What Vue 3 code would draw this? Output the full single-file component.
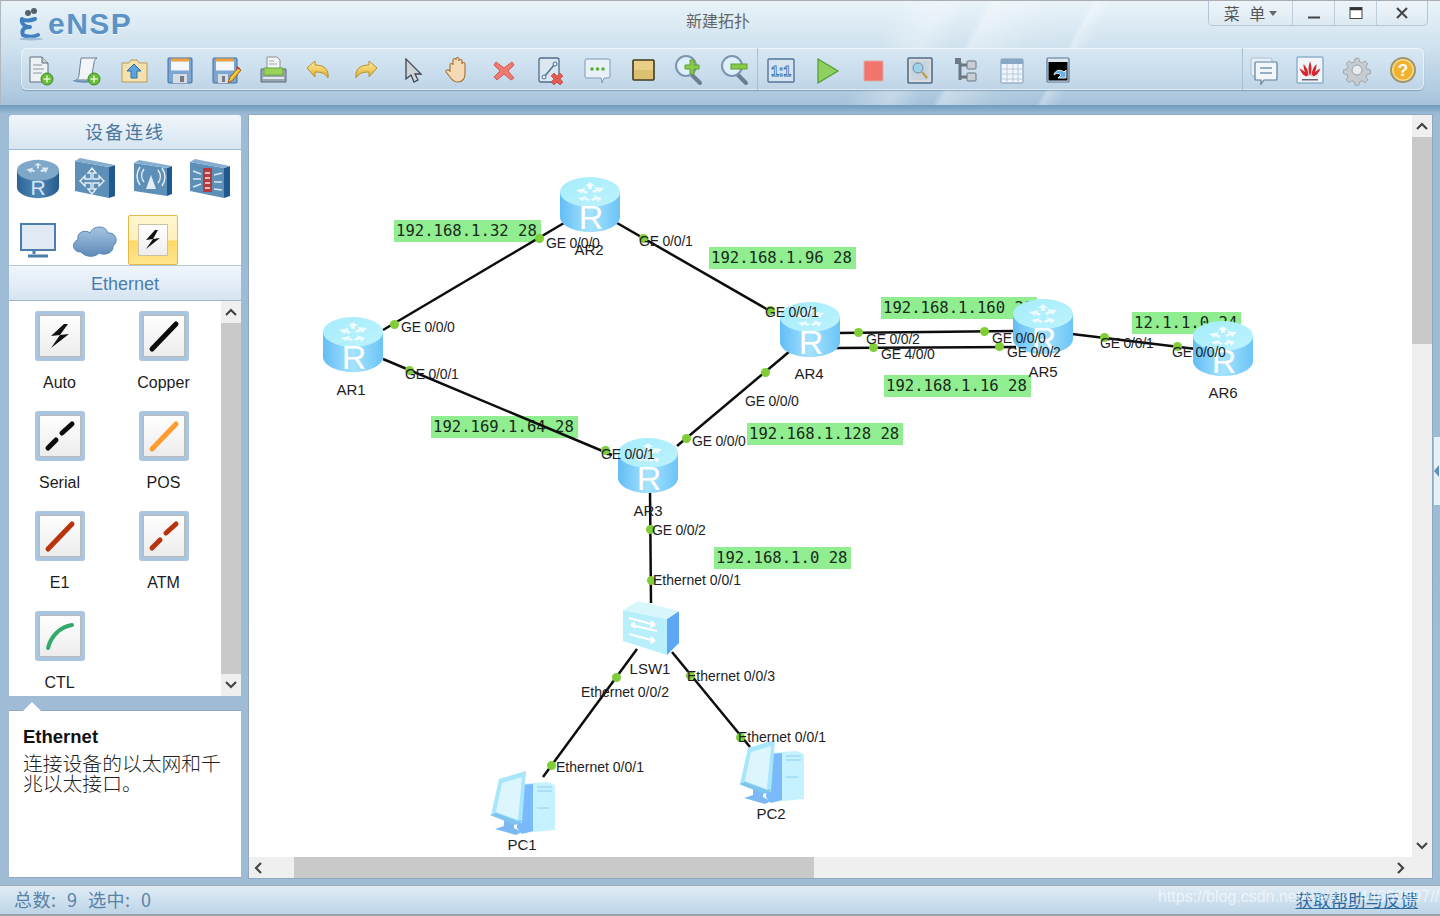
<script setup>
const OX = 249
const OY = 115

const links = [
  [383, 330, 564, 223], [617, 223, 770, 311], [383, 359, 612, 455], [677, 446, 790, 351],
  [838, 333, 1015, 331], [834, 348, 1016, 347], [1072, 334, 1196, 349],
  [650, 490, 651, 603], [637, 649, 543, 777], [672, 652, 750, 747]
]
const dots = [
  [394, 324], [539, 238], [643, 238], [770, 310], [409, 370], [605, 450], [686, 438], [765, 372],
  [858, 332], [984, 331], [873, 347], [999, 346], [1104, 337], [1177, 346], [650, 529], [651, 580],
  [616, 677], [551, 765], [690, 675], [740, 737]
]
const subnets = [
  { t: '192.168.1.32 28', x: 394, y: 220 }, { t: '192.168.1.96 28', x: 709, y: 247 },
  { t: '192.168.1.160 28', x: 881, y: 297 }, { t: '12.1.1.0 24', x: 1132, y: 312 },
  { t: '192.168.1.16 28', x: 884, y: 375 }, { t: '192.168.1.128 28', x: 747, y: 423 },
  { t: '192.168.1.0 28', x: 714, y: 547 }, { t: '192.169.1.64 28', x: 431, y: 416 }
]
const ports = [
  ['GE 0/0/0', 401, 327], ['GE 0/0/1', 405, 374], ['GE 0/0/0', 546, 243], ['GE 0/0/1', 639, 241],
  ['GE 0/0/1', 765, 312], ['GE 0/0/2', 866, 339], ['GE 4/0/0', 881, 354], ['GE 0/0/0', 745, 401],
  ['GE 0/0/0', 992, 338], ['GE 0/0/2', 1007, 352], ['GE 0/0/1', 1100, 343], ['GE 0/0/0', 1172, 352],
  ['GE 0/0/1', 601, 454], ['GE 0/0/0', 692, 441], ['GE 0/0/2', 652, 530],
  ['Ethernet 0/0/1', 653, 580], ['Ethernet 0/0/2', 581, 692], ['Ethernet 0/0/3', 687, 676],
  ['Ethernet 0/0/1', 556, 767], ['Ethernet 0/0/1', 738, 737]
]
const names = [
  ['AR1', 351, 389], ['AR2', 589, 249], ['AR3', 648, 510], ['AR4', 809, 373], ['AR5', 1043, 371],
  ['AR6', 1223, 392], ['LSW1', 650, 668], ['PC1', 522, 844], ['PC2', 771, 813]
]
const routers = [[323, 317], [560, 177], [618, 438], [780, 302], [1013, 299], [1193, 321]]
const pcs = [[489, 770], [738, 739]]

const cables = [
  { n: 'Auto', k: 'auto' }, { n: 'Copper', k: 'line', c: '#0c0c0c' },
  { n: 'Serial', k: 'dash', c: '#0c0c0c' }, { n: 'POS', k: 'line', c: '#ff9c2e' },
  { n: 'E1', k: 'line', c: '#b8330e' }, { n: 'ATM', k: 'dash', c: '#b8330e' },
  { n: 'CTL', k: 'curve', c: '#33aa6c' }
]
const pos = (x, y) => ({ left: x - OX + 'px', top: y - OY + 'px' })
</script>

<template>
  <div class="win">
    <svg class="defs" width="0" height="0" aria-hidden="true">
      <defs>
        <linearGradient id="rb" x1="0" x2="1" y1="0" y2="0">
          <stop offset="0" stop-color="#63bdf5" /><stop offset=".5" stop-color="#a5e3ff" /><stop offset="1" stop-color="#6cc4f6" />
        </linearGradient>
        <linearGradient id="rt" x1="0" x2="1" y1="0" y2="1">
          <stop offset="0" stop-color="#a5ecfb" /><stop offset="1" stop-color="#bdf3fd" />
        </linearGradient>
        <linearGradient id="dr" x1="0" x2="1" y1="0" y2="0">
          <stop offset="0" stop-color="#2c6496" /><stop offset=".5" stop-color="#4f88b6" /><stop offset="1" stop-color="#255b8c" />
        </linearGradient>
        <linearGradient id="yl" x1="0" x2="0" y1="0" y2="1">
          <stop offset="0" stop-color="#fbeea0" /><stop offset="1" stop-color="#e0ad2c" />
        </linearGradient>
        <linearGradient id="cl" x1="0" x2="0" y1="0" y2="1">
          <stop offset="0" stop-color="#a6c4e4" /><stop offset="1" stop-color="#5d8ab8" />
        </linearGradient>
        <symbol id="router" viewBox="0 0 60 56">
          <path d="M0 15v25c0 8 13 15 30 15s30-7 30-15V15z" fill="url(#rb)" />
          <ellipse cx="30" cy="15" rx="30" ry="15" fill="url(#rt)" />
          <path d="M16 13l10-2-2 2 4 2-2 2-4-2v2zM44 11l-10-1 2 2-4 2 2 2 4-2 1 2zM18 21l9-2-1 2 4 1-2 2-4-2-1 2zM42 21l-9-3 2 2-4 2 2 2 4-2 1 3zM30 5l5 4h-3v3h-4V9h-3z" fill="#fff" opacity=".8" />
          <text x="31" y="52" text-anchor="middle" font-family="Liberation Sans" font-size="34" fill="#fff">R</text>
        </symbol>
        <symbol id="pc" viewBox="0 0 66 66">
          <path d="M33 14l25-2 8 3v45l-32 3z" fill="#c6f1ff" />
          <path d="M30 15l14-1v47l-11 3-5-6z" fill="#7ab9fb" />
          <path d="M48 17h15M48 21h15M48 38h12" stroke="#8ed0ef" fill="none" />
          <path d="M2 45L10 9l27-8-4 52z" fill="#a8e6fb" />
          <path d="M7 42l6-29 20-6-4 43z" fill="#ddf6fe" />
          <path d="M1 45l6-2 22 8 3-1v2l-6 3z" fill="#7ec5ee" />
          <path d="M17 51l8 3v4l8 4-6 3-21-6 9-3v-6z" fill="#7cb9f2" />
        </symbol>
      </defs>
    </svg>

    <header class="head">
      <div class="titlerow">
        <div class="brand">
          <svg width="26" height="34" viewBox="0 0 26 34">
            <circle cx="10" cy="6" r="3" fill="#55606c" /><circle cx="16" cy="4" r="3" fill="#55606c" />
            <path d="M4 12c4 3 10 1 13 0M4 12c-1 5 3 8 8 8M12 20c-6 0-9 3-7 8 4 2 10 2 15 0" fill="none" stroke="#3f7fc0" stroke-width="4" stroke-linecap="round" />
            <ellipse cx="13" cy="32" rx="12" ry="1.5" fill="#9cbdd7" />
          </svg>
          <span class="ensp">eNSP</span>
        </div>
        <div class="title">新建拓扑</div>
        <div class="ctrls">
          <div class="cb menu"><span class="mtext">菜 单</span><i class="caret"></i></div>
          <div class="cb sm"><svg width="14" height="14" viewBox="0 0 14 14"><path d="M1 11.500h12" stroke="#444" stroke-width="2" /></svg></div>
          <div class="cb sm"><svg width="16" height="14" viewBox="0 0 16 14"><rect x="2" y="1.500" width="12" height="11" fill="#fff" stroke="#444" /><path d="M2 3h12" stroke="#333" stroke-width="2.500" /></svg></div>
          <div class="cb lg"><svg width="14" height="14" viewBox="0 0 14 14"><path d="M2 2l10 10M12 2L2 12" stroke="#444" stroke-width="2" /></svg></div>
        </div>
      </div>

      <div class="tools">
        <div class="tg g1">
          <svg class="ti" viewBox="0 0 34 34"><path d="M6 4h12l6 6v19H6z" fill="#eef2f5" stroke="#5f6f80" /><path d="M18 4v6h6" fill="#c6d0d8" stroke="#5f6f80" /><path d="M9 12h9M9 16h11M9 20h9" stroke="#8a96a2" /><circle cx="23" cy="26" r="6" fill="#6cbc3c" stroke="#3c8a2a" /><path d="M23 22.500v7M19.500 26h7" stroke="#dff5c8" stroke-width="1.500" /></svg>
          <svg class="ti" viewBox="0 0 34 34"><path d="M11 5h16c-2 1-3 3-3 5l-3 17H6c2-1 3-3 3-5z" fill="#f1f5f8" stroke="#6b7f92" /><path d="M4 27c0 2 14 2 16 1" fill="none" stroke="#6b8fb0" stroke-width="2" /><circle cx="24" cy="26" r="6" fill="#6cbc3c" stroke="#3c8a2a" /><path d="M24 22.500v7M20.500 26h7" stroke="#dff5c8" stroke-width="1.500" /></svg>
          <svg class="ti" viewBox="0 0 34 34"><path d="M5 10h7l2-3h6l2 3h8v19H5z" fill="#f3e2ae" stroke="#b89c5a" /><path d="M17 11l7 7h-4v7h-6v-7h-4z" fill="#5ea3de" stroke="#2d6ea8" /></svg>
          <svg class="ti" viewBox="0 0 34 34"><rect x="5" y="5" width="24" height="25" rx="1" fill="#7ba5d2" stroke="#476f9b" /><rect x="8" y="5.500" width="18" height="3" fill="#f4a13c" /><rect x="8" y="8.500" width="18" height="9" fill="#f4f6f8" /><rect x="10" y="21" width="14" height="9" fill="#d8dce0" /><rect x="17" y="23" width="4" height="6" fill="#6f7d88" /></svg>
          <svg class="ti" viewBox="0 0 34 34"><rect x="4" y="5" width="24" height="25" rx="1" fill="#7ba5d2" stroke="#476f9b" /><rect x="7" y="5.500" width="18" height="3" fill="#f4a13c" /><rect x="7" y="8.500" width="18" height="9" fill="#f4f6f8" /><rect x="9" y="21" width="10" height="9" fill="#d8dce0" /><rect x="13" y="23" width="3" height="6" fill="#6f7d88" /><path d="M19 30l2-6 8-9 3 2-8 10z" fill="#f0c83a" stroke="#a25a20" /><path d="M27.500 14l3 2" stroke="#c0392b" stroke-width="2" /></svg>
          <svg class="ti" viewBox="0 0 34 34"><path d="M11 4h10l3 3v9H11z" fill="#f3f3f3" stroke="#8a9198" /><path d="M13 8h5M13 11h8" stroke="#9aa" /><path d="M5 16h25v13H5z" fill="#9aa6b0" stroke="#5c6c7c" /><path d="M8 15h19v7H8z" fill="#9ad35c" stroke="#67a83c" /><path d="M7 25h21" stroke="#e4e8ec" stroke-width="2" /></svg>
          <svg class="ti" viewBox="0 0 34 34"><path d="M5 15L13 8v4c9 0 14 4 13 13-3-5-7-6-13-6v5z" fill="url(#yl)" stroke="#b89428" /></svg>
          <svg class="ti" viewBox="0 0 34 34"><path d="M29 15L21 8v4c-9 0-14 4-13 13 3-5 7-6 13-6v5z" fill="url(#yl)" stroke="#b89428" /></svg>
          <svg class="ti" viewBox="0 0 34 34"><path d="M11 6v20l5-4 3 7 4-2-3-6h6z" fill="#cfd4d9" stroke="#3f4650" stroke-width="1.300" /></svg>
          <svg class="ti" viewBox="0 0 34 34"><path d="M9 19V12c0-2 3-2 3 0V7c0-2 3-2 3 0v-1c0-2 3-2 3 0v2c0-2 3-2 3 0v3c0-2 3-2 3 0v9c0 6-3 9-7 9s-6-2-8-5l-4-5c-1-2 2-3 4-1z" fill="#f4d9b4" stroke="#a67a3f" stroke-width="1.200" /></svg>
          <svg class="ti" viewBox="0 0 34 34"><path d="M9 9l8 6 8-6 2 3-6 6 6 7-3 2-7-6-7 6-3-3 6-6-6-6z" fill="#ee7a72" stroke="#d45a54" /></svg>
          <svg class="ti" viewBox="0 0 34 34"><rect x="5" y="5" width="20" height="24" rx="2" fill="#dce7f0" stroke="#4f6d8c" stroke-width="1.300" /><path d="M10 24l11-13" stroke="#4a6f96" stroke-width="1.500" /><circle cx="21" cy="11" r="2" fill="#eaf3fa" stroke="#456c92" /><circle cx="10" cy="24" r="2" fill="#eaf3fa" stroke="#456c92" /><path d="M20 20l3 3 3-3 3 3-3 3 3 3-3 3-3-3-3 3-3-3 3-3-3-3z" fill="#e25a52" stroke="#b93a34" stroke-width=".6" /></svg>
          <svg class="ti" viewBox="0 0 34 34"><path d="M6 6h23a2 2 0 0 1 1 2v16a2 2 0 0 1-2 1H24l-2 5-1-5H6a2 2 0 0 1-1-2V8a2 2 0 0 1 1-2z" fill="#e9f1f8" stroke="#7e9ab5" /><circle cx="12" cy="16" r="1.800" fill="#5cae3c" /><circle cx="17.500" cy="16" r="1.800" fill="#5cae3c" /><circle cx="23" cy="16" r="1.800" fill="#5cae3c" /></svg>
          <svg class="ti" viewBox="0 0 34 34"><rect x="7" y="7" width="21" height="20" rx="1" fill="#e9cf85" stroke="#3f3a22" stroke-width="1.600" /><path d="M8 17h19v9H8z" fill="#dcc070" /></svg>
          <svg class="ti" viewBox="0 0 34 34"><path d="M19 22l8 8" stroke="#6b7f92" stroke-width="4" stroke-linecap="round" /><circle cx="13" cy="13" r="10" fill="#dff0fb" stroke="#7b95ae" stroke-width="2" /><path d="M17 7h4v5h5v4h-5v5h-4v-5h-5v-4h5z" fill="#8bc94a" stroke="#5aa030" /></svg>
          <svg class="ti" viewBox="0 0 34 34"><path d="M19 22l8 8" stroke="#6b7f92" stroke-width="4" stroke-linecap="round" /><circle cx="13" cy="13" r="10" fill="#dff0fb" stroke="#7b95ae" stroke-width="2" /><rect x="12" y="11" width="16" height="5" fill="#8bc94a" stroke="#5aa030" /></svg>
        </div>
        <div class="tg g2">
          <svg class="ti" viewBox="0 0 34 34"><rect x="4" y="6" width="26" height="23" rx="1" fill="#d6e4f0" stroke="#54749a" stroke-width="1.400" /><text x="17" y="23" text-anchor="middle" font-family="Liberation Sans" font-weight="700" font-size="14" fill="#dcecf8" stroke="#3f74aa" stroke-width=".8">1:1</text></svg>
          <svg class="ti" viewBox="0 0 34 34"><path d="M8 6l20 12L8 30z" fill="#8fd160" stroke="#4e9b30" stroke-width="1.200" /></svg>
          <svg class="ti" viewBox="0 0 34 34"><rect x="8" y="8" width="19" height="20" rx="1" fill="#f2756c" stroke="#d9b0a6" /></svg>
          <svg class="ti" viewBox="0 0 34 34"><rect x="5" y="5" width="24" height="25" rx="1" fill="#dcdcdc" stroke="#4f6d8c" stroke-width="1.600" /><rect x="8" y="8" width="18" height="19" fill="#c7d3dd" /><circle cx="15" cy="15" r="5" fill="#9fd0ec" stroke="#6b8fa8" /><path d="M19 19l5 6" stroke="#c09a45" stroke-width="2" /></svg>
          <svg class="ti" viewBox="0 0 34 34"><path d="M11 9v18M11 12h8M11 24h8" stroke="#6a7680" stroke-width="3" /><rect x="6" y="5" width="6" height="6" fill="#707a84" /><rect x="18" y="8" width="9" height="8" rx="1" fill="#c8ced4" stroke="#6a7680" /><rect x="18" y="20" width="9" height="8" rx="1" fill="#c8ced4" stroke="#6a7680" /></svg>
          <svg class="ti" viewBox="0 0 34 34"><rect x="6" y="6" width="22" height="24" rx="1" fill="#f2f6fa" stroke="#7b9ab8" /><rect x="6" y="6" width="22" height="5" fill="#88a8c6" /><path d="M6 16h22M6 21h22M6 26h22M12 11v19M18 11v19M23 11v19" stroke="#b4cade" /></svg>
          <svg class="ti" viewBox="0 0 34 34"><rect x="6" y="5" width="22" height="24" rx="1" fill="#dfe7ee" stroke="#54749a" stroke-width="1.200" /><rect x="7.500" y="9" width="19" height="18.500" fill="#000" /><path d="M13 22c1-5 6-6 10-3l2-2v8h-8l3-3c-2-2-5-2-7 0z" fill="#6ab0ea" stroke="#e6f2fb" /></svg>
        </div>
        <div class="tg g3">
          <svg class="ti" viewBox="0 0 34 34"><rect x="4" y="5" width="21" height="18" rx="2" fill="#e6eff6" stroke="#a9c0d4" /><path d="M9 9h20a1 1 0 0 1 1 1v16a1 1 0 0 1-1 1h-12l-3 4v-4H9a1 1 0 0 1-1-1V10a1 1 0 0 1 1-1z" fill="#f0f6fa" stroke="#5f7f9c" stroke-width="1.200" /><path d="M13 15h12M13 20h12" stroke="#7896b0" stroke-width="1.400" /></svg>
          <svg class="ti" viewBox="0 0 34 34"><rect x="4" y="4" width="26" height="26" rx="1" fill="#f2f5f8" stroke="#8eb0cc" stroke-width="1.500" /><path d="M17 23c-2-4-2-9 0-15 2 6 2 11 0 15zM15.500 23c-3-2-5-6-5-12 3 3 5 7 5 12zM18.500 23c3-2 5-6 5-12-3 3-5 7-5 12zM14.500 23.500c-3 0-6-3-8-8 4 2 7 4 8 8zM19.500 23.500c3 0 6-3 8-8-4 2-7 4-8 8z" fill="#d8232a" /><rect x="9" y="26" width="16" height="1.500" fill="#667" /></svg>
          <svg class="ti" viewBox="0 0 34 34"><path d="M15 4h4l1 4 3 1 3-2 3 3-2 3 1 3 4 1v4l-4 1-1 3 2 3-3 3-3-2-3 1-1 4h-4l-1-4-3-1-3 2-3-3 2-3-1-3-4-1v-4l4-1 1-3-2-3 3-3 3 2 3-1z" transform="translate(1.700 1.700) scale(.9)" fill="#c6ccd0" stroke="#98a2a8" /><circle cx="17" cy="17" r="5" fill="#e8ecee" stroke="#98a2a8" /></svg>
          <svg class="ti" viewBox="0 0 34 34"><circle cx="17" cy="17" r="12" fill="#f6dc8a" stroke="#a0966e" stroke-width="2" /><circle cx="17" cy="17" r="9.500" fill="#f0b12c" /><text x="17" y="23" text-anchor="middle" font-family="Liberation Sans" font-weight="700" font-size="17" fill="#fff">?</text></svg>
        </div>
      </div>
    </header>

    <main class="main">
      <aside class="left">
        <div class="phead devhead">设备连线</div>
        <div class="devices">
          <div class="dv"><svg width="44" height="42" viewBox="0 0 46 42"><path d="M1 12v18c0 6 10 11 22 11s22-5 22-11V12z" fill="url(#dr)" /><ellipse cx="23" cy="12" rx="22" ry="11" fill="#7ea7c9" /><path d="M11 11l7-2-1 2 3 1-1 2-3-1v2zM34 9l-7 0 1 2-3 1 2 2 3-1 1 2zM23 4l4 3h-3v3h-2V7h-3z" fill="#dbe8f2" /><text x="23" y="38" text-anchor="middle" font-family="Liberation Sans" font-size="22" fill="#d6e6f3">R</text></svg></div>
          <div class="dv"><svg width="42" height="42" viewBox="0 0 42 42"><path d="M1 3l34 6v31L1 33z" fill="#5e8fb7" /><path d="M35 9l6-2v31l-6 2z" fill="#1e5a8f" /><path d="M1 3l5-3 35 7-6 2z" fill="#85add0" /><path d="M18 10l4 5h-3v6h6v-3l5 5-5 5v-3h-6v6h3l-4 5-4-5h3v-6H11v3l-5-5 5-5v3h6v-6h-3z" fill="none" stroke="#e3eef6" stroke-width="1.400" /></svg></div>
          <div class="dv"><svg width="40" height="38" viewBox="0 0 40 38"><path d="M1 3l33 5v28L1 31z" fill="#5e8fb7" /><path d="M34 8l5-2v28l-5 2z" fill="#1e5a8f" /><path d="M1 3l5-3 33 6-5 2z" fill="#85add0" /><path d="M18 15l-5 14h10z" fill="#e3eef6" /><path d="M11 9c-3 4-3 9 0 13M7 7c-4 6-4 12 0 18M25 10c3 4 3 9 0 13M29 8c4 6 4 12 0 18" fill="none" stroke="#e3eef6" stroke-width="1.400" /></svg></div>
          <div class="dv"><svg width="42" height="40" viewBox="0 0 42 40"><path d="M1 3l34 6v30L1 32z" fill="#5e8fb7" /><path d="M35 9l6-2v30l-6 2z" fill="#1e5a8f" /><path d="M1 3l5-3 35 7-6 2z" fill="#85add0" /><rect x="14" y="9" width="9" height="24" fill="#b53a3e" /><path d="M16 14h5M16 19h5M16 24h5M16 29h5" stroke="#eee" stroke-width="1.500" /><path d="M4 12l8 3M4 20h8M4 28l8-3M25 16l8-2M25 23h8M25 30l8 1" stroke="#dbe8f2" stroke-width="1.400" /></svg></div>
          <div class="dv low"><svg width="36" height="36" viewBox="0 0 36 36"><rect x="1" y="2" width="34" height="26" fill="#dfeaf5" stroke="#4c7eab" stroke-width="2" /><path d="M14 28v4M8 34h20" stroke="#4c7eab" stroke-width="3" /></svg></div>
          <div class="dv low"><svg width="46" height="38" viewBox="0 0 46 38"><path d="M9 31c-9 0-10-10-3-12C4 11 14 8 18 12c3-8 16-8 18 0 8-1 11 9 5 13 1 7-9 10-14 7-4 5-14 4-18-1z" fill="url(#cl)" stroke="#5a85b0" /></svg></div>
          <div class="dv low sel">
            <div class="seltile"><svg width="20" height="24" viewBox="0 0 20 24"><path d="M12 2L3 12l7-1-7 10 14-11-7 1 5-9z" fill="#111" /></svg></div>
          </div>
        </div>
        <div class="phead ethead">Ethernet</div>
        <div class="listwrap">
          <div class="cables">
            <div v-for="c in cables" :key="c.n" class="cable">
              <div class="tile">
                <div class="tilein">
                  <svg width="36" height="36" viewBox="0 0 36 36">
                    <path v-if="c.k === 'auto'" d="M22 6L9 18l9-1-9 13 18-14-9 1 8-11z" fill="#111" />
                    <path v-else-if="c.k === 'line'" d="M6 31L30 6" :stroke="c.c" stroke-width="5" stroke-linecap="round" />
                    <path v-else-if="c.k === 'dash'" d="M6 30l8-8M20 15l10-9" :stroke="c.c" stroke-width="5" stroke-linecap="round" />
                    <path v-else d="M6 30C9 18 18 9 30 7" fill="none" :stroke="c.c" stroke-width="4" stroke-linecap="round" />
                  </svg>
                </div>
              </div>
              <div class="cname">{{ c.n }}</div>
            </div>
          </div>
          <div class="vbar lsb">
            <div class="sbtn"><svg width="12" height="8" viewBox="0 0 12 8"><path d="M1 7l5-5 5 5" fill="none" stroke="#444" stroke-width="2.200" /></svg></div>
            <div class="lthumb"></div>
            <div class="sbtn"><svg width="12" height="8" viewBox="0 0 12 8"><path d="M1 1l5 5 5-5" fill="none" stroke="#444" stroke-width="2.200" /></svg></div>
          </div>
        </div>
        <div class="gap"><i class="tri"></i></div>
        <div class="help">
          <div class="htitle">Ethernet</div>
          <div class="hdesc">连接设备的以太网和千兆以太接口。</div>
        </div>
      </aside>

      <section class="canvas">
        <div class="stage">
          <div v-for="s in subnets" :key="s.t" class="subnet" :style="pos(s.x, s.y)">{{ s.t }}</div>
          <svg class="wires" width="1163" height="742" viewBox="249 115 1163 742">
            <line v-for="(l, i) in links" :key="i" :x1="l[0]" :y1="l[1]" :x2="l[2]" :y2="l[3]" stroke="#0d0d0d" stroke-width="2.500" />
          </svg>
          <svg v-for="r in routers" :key="r[0]" class="node" :style="pos(r[0], r[1])" width="60" height="56"><use href="#router" width="60" height="56" /></svg>
          <svg class="node" :style="pos(623, 601)" width="56" height="54" viewBox="0 0 56 54">
            <path d="M0 9v31l44 14V18z" fill="#b9effb" /><path d="M44 18l12-8v32l-12 12z" fill="#5da8f5" /><path d="M0 9L15 0l41 10-12 8z" fill="#d7f7fd" />
            <path d="M6 17l26 7M32 24l-4-4M32 24l-5 2M34 30l-26-6M8 24l4-2M8 24l5 3M6 33l26 7M32 40l-4-4M32 40l-5 2" stroke="#fff" stroke-width="2" fill="none" />
          </svg>
          <svg v-for="p in pcs" :key="p[0]" class="node" :style="pos(p[0], p[1])" width="66" height="66"><use href="#pc" width="66" height="66" /></svg>
          <i v-for="(d, i) in dots" :key="i" class="dot" :style="pos(d[0], d[1])"></i>
          <span v-for="(p, i) in ports" :key="i" class="port" :class="{ eth: p[0].startsWith('Eth') }" :style="pos(p[1], p[2])">{{ p[0] }}</span>
          <span v-for="n in names" :key="n[0]" class="name" :style="pos(n[1], n[2])">{{ n[0] }}</span>
        </div>
        <div class="vbar csb">
          <div class="sbtn"><svg width="12" height="8" viewBox="0 0 12 8"><path d="M1 7l5-5 5 5" fill="none" stroke="#444" stroke-width="2.200" /></svg></div>
          <div class="cthumb"></div>
          <div class="spacer"></div>
          <div class="sbtn"><svg width="12" height="8" viewBox="0 0 12 8"><path d="M1 1l5 5 5-5" fill="none" stroke="#444" stroke-width="2.200" /></svg></div>
        </div>
        <div class="hbar">
          <div class="hbtn lft"><svg width="8" height="12" viewBox="0 0 8 12"><path d="M7 1L2 6l5 5" fill="none" stroke="#444" stroke-width="2.200" /></svg></div>
          <div class="hthumb"></div>
          <div class="spacer"></div>
          <div class="hbtn rgt"><svg width="8" height="12" viewBox="0 0 8 12"><path d="M1 1l5 5-5 5" fill="none" stroke="#444" stroke-width="2.200" /></svg></div>
        </div>
        <div class="corner"></div>
      </section>
      <div class="split"><svg width="5" height="12" viewBox="0 0 5 12"><path d="M5 0L0 6l5 6z" fill="#5f8fb8" /></svg></div>
    </main>

    <footer class="status">
      <span class="stat">总数: 9 选中: 0</span>
      <a class="feedback">获取帮助与反馈</a>
      <span class="mark">https://blog.csdn.net/weixin_44669897//</span>
    </footer>
  </div>
</template>

<style>
html, body { margin: 0; overflow: hidden; }
</style>

<style scoped>
.win {
  position: relative;
  width: 1440px;
  height: 916px;
  overflow: hidden;
  display: flex;
  flex-direction: column;
  background: #a0bcd5;
  font-family: "Liberation Sans", "Noto Sans CJK SC", sans-serif;
}
.defs { position: absolute; }
.head {
  height: 105px;
  flex: none;
  box-sizing: border-box;
  border-top: 1px solid #a9adb0;
  border-left: 1px solid #b0b8c0;
  background:
    linear-gradient(118deg, transparent 66%, rgba(255,255,255,.35) 66.5%, rgba(255,255,255,.05) 70%, transparent 72%),
    linear-gradient(118deg, transparent 73%, rgba(255,255,255,.3) 73.300%, transparent 74.500%),
    linear-gradient(118deg, transparent 60%, rgba(255,255,255,.3) 63%, transparent 65%),
    linear-gradient(180deg, #e9f3f9 0%, #d2e4f0 40%, #b0cadf 88%, #a5c2da 100%);
  display: flex;
  flex-direction: column;
}
.titlerow {
  height: 47px;
  flex: none;
  box-sizing: border-box;
  padding: 0 12px 0 7px;
  display: grid;
  grid-template-columns: 1fr auto 1fr;
}
.brand { display: flex; align-items: center; gap: 4px; margin-left: 10px; height: 46px; }
.ensp {
  font-size: 30px;
  font-weight: 700;
  letter-spacing: 1.500px;
  color: #5c93c6;
  text-shadow: 0 1px 1px rgba(255,255,255,.6);
}
.title {
  font-size: 16px;
  color: #666;
  font-family: "Noto Sans CJK SC", sans-serif;
  line-height: 38px;
}
.ctrls {
  justify-self: end;
  height: 25px;
  display: flex;
  background: linear-gradient(180deg, #eef5fa, #dce9f2);
  border: 1px solid #b4c6d5;
  border-top: none;
  border-radius: 0 0 5px 5px;
  box-sizing: border-box;
}
.cb {
  display: flex;
  align-items: center;
  justify-content: center;
  border-left: 1px solid #bccddb;
  color: #555;
  box-sizing: border-box;
}
.cb.menu { width: 83px; border-left: none; font-size: 16px; font-family: "Noto Sans CJK SC", sans-serif; gap: 4px; }
.mtext { word-spacing: 6px; }
.cb.sm { width: 42px; }
.cb.lg { width: 51px; }
.caret { width: 0; height: 0; border: 4px solid transparent; border-top: 5px solid #666; border-bottom: none; }
.tools {
  height: 42px;
  margin-left: 20px;
  width: 1403px;
  flex: none;
  box-sizing: border-box;
  display: flex;
  border-radius: 6px;
  background: linear-gradient(180deg, #d9e8f3 0%, #c9dded 60%, #bed4e6 100%);
  box-shadow: inset 0 0 0 1px rgba(255,255,255,.55), 0 1px 1px rgba(80,120,160,.5);
}
.tg { display: flex; align-items: center; height: 42px; box-sizing: border-box; padding-top: 2px; }
.g1 { width: 737px; padding-left: 3px; gap: 12.330px; border-right: 1px solid #a9c1d5; }
.g2 { flex: 1; padding-left: 6px; gap: 12.200px; }
.g3 { width: 182px; padding-left: 4px; gap: 12.300px; border-left: 1px solid #a9c1d5; }
.ti { width: 34px; height: 34px; flex: none; }

.main {
  flex: 1;
  min-height: 0;
  display: flex;
  box-sizing: border-box;
  padding: 10px 0 7px 9px;
  gap: 8px;
  position: relative;
  background: linear-gradient(180deg, #6f9abb 0, #9dbbd5 9px, #a0bcd5 100%);
}
.left { width: 232px; display: flex; flex-direction: column; flex: none; }
.phead {
  flex: none;
  display: flex;
  align-items: center;
  justify-content: center;
  background: linear-gradient(180deg, #f0f6fb, #d6e5f1);
  box-sizing: border-box;
}
.devhead {
  height: 35px;
  padding-bottom: 3px;
  font-size: 18px;
  letter-spacing: 2px;
  color: #4b789f;
  border-radius: 3px 3px 0 0;
  border-bottom: 1px solid #9db7cd;
  font-family: "Noto Sans CJK SC", sans-serif;
}
.ethead {
  height: 36px;
  padding-top: 2px;
  font-size: 18px;
  color: #4a7eae;
  border-top: 1px solid #b4c8d9;
  border-bottom: 1px solid #9db7cd;
}
.devices {
  height: 115px;
  flex: none;
  background: #fff;
  display: grid;
  grid-template-columns: repeat(4, 57.500px);
  grid-template-rows: 58px 57px;
}
.dv { display: flex; align-items: center; justify-content: center; }
.low { align-self: end; height: 50px; }
.sel {
  width: 50px;
  justify-self: center;
  box-sizing: border-box;
  border: 1px solid #e3b94a;
  border-radius: 2px;
  background: linear-gradient(180deg, #fff6cf 0, #fff1bd 50%, #ffd967 52%, #ffe58f 100%);
}
.seltile {
  width: 28px;
  height: 30px;
  background: linear-gradient(180deg, #fff, #eee);
  border: 1px solid #c9c2a6;
  display: flex;
  align-items: center;
  justify-content: center;
}
.listwrap { height: 395px; flex: none; background: #fff; display: flex; position: relative; overflow: hidden; }
.cables {
  width: 212px;
  flex: none;
  display: grid;
  grid-template-columns: 101px 101px;
  column-gap: 3px;
  grid-auto-rows: 100px;
  align-content: start;
}
.cable { padding-top: 10px; display: flex; flex-direction: column; align-items: center; box-sizing: border-box; }
.tile {
  width: 50px;
  height: 50px;
  box-sizing: border-box;
  padding: 4px;
  background: #a9c5e0;
  border-radius: 3px;
  flex: none;
}
.tilein {
  width: 42px;
  height: 42px;
  box-sizing: border-box;
  background: linear-gradient(180deg, #fff, #ececec);
  border: 1px solid #b9b9b9;
  display: flex;
  align-items: center;
  justify-content: center;
}
.cname { margin-top: 13px; font-size: 16px; line-height: 18px; color: #1c1c1c; }
.vbar { display: flex; flex-direction: column; background: #efefef; }
.lsb { width: 20px; flex: none; margin-left: auto; margin-right: 0; height: 100%; }
.sbtn { height: 22px; flex: none; display: flex; align-items: center; justify-content: center; }
.lthumb { flex: 1; background: #c9c9c9; }
.spacer { flex: 1; }
.gap { height: 15px; flex: none; position: relative; }
.tri {
  position: absolute;
  left: 14px;
  top: 6px;
  width: 0;
  height: 0;
  border-left: 9px solid transparent;
  border-right: 9px solid transparent;
  border-bottom: 9px solid #fff;
}
.help {
  height: 166px;
  flex: none;
  box-sizing: border-box;
  padding: 15px 14px 0;
  background: #fff;
  box-shadow: 0 1px 0 #8fa8bf, 0 -1px 0 #8fa8bf;
}
.htitle { font-size: 18.500px; font-weight: 700; line-height: 21px; color: #111; }
.hdesc {
  margin-top: 6px;
  font-size: 19.800px;
  line-height: 20px;
  color: #222;
  font-family: "Noto Sans CJK SC", sans-serif;
  font-weight: 300;
}
.canvas {
  width: 1183px;
  flex: none;
  display: grid;
  grid-template-columns: 1163px 20px;
  grid-template-rows: 742px 21px;
  background: #fff;
  box-shadow: 0 0 0 1px #8fa8bf;
}
.stage { position: relative; overflow: hidden; background: #fff; }
.wires { position: absolute; left: 0; top: 0; }
.node { position: absolute; }
.subnet {
  position: absolute;
  height: 22px;
  line-height: 23px;
  padding: 0 4px 0 2px;
  background: #90ee90;
  color: #1a2a1a;
  font-family: "DejaVu Sans Mono", monospace;
  font-size: 15.600px;
  white-space: pre;
}
.dot {
  position: absolute;
  width: 9px;
  height: 9px;
  margin: -4.500px 0 0 -4.500px;
  border-radius: 50%;
  background: #7fce38;
}
.port, .name { position: absolute; color: #1d1d24; white-space: nowrap; transform: translateY(-50%); }
.port { font-size: 14px; letter-spacing: -.2px; }
.port.eth { letter-spacing: 0; }
.name { font-size: 15px; transform: translate(-50%, -50%); }
.cthumb { height: 207px; background: #c9c9c9; flex: none; }
.csb { height: 100%; }
.hbar { display: flex; background: #efefef; grid-column: 1 / 2; }
.hbtn { width: 21px; flex: none; box-sizing: border-box; display: flex; align-items: center; justify-content: center; }
.hbtn.lft { padding-right: 3px; }
.hbtn.rgt { padding-right: 2px; }
.hthumb { width: 520px; margin-left: 24px; background: #c9c9c9; flex: none; }
.corner { background: #efefef; }
.split {
  position: absolute;
  left: 1434px;
  top: 332px;
  width: 6px;
  height: 68px;
  background: #e6f0f7;
  display: flex;
  align-items: center;
}
.status {
  height: 31px;
  flex: none;
  box-sizing: border-box;
  position: relative;
  border-top: 1px solid #a4a8ac;
  border-bottom: 2px solid #9aa2a8;
  background: linear-gradient(180deg, #e0ecf6, #bdd5e7);
  display: flex;
  align-items: center;
  justify-content: space-between;
  padding: 0 22px 2px 14px;
  font-family: "Noto Sans CJK SC", sans-serif;
}
.stat { font-size: 18px; letter-spacing: .5px; color: #5a82a6; word-spacing: 6px; }
.feedback { font-size: 17.500px; color: #2c6b9f; text-decoration: underline; }
.mark {
  position: absolute;
  left: 1158px;
  top: 2px;
  font-family: "Liberation Sans", sans-serif;
  font-size: 16px;
  color: rgba(255,255,255,.6);
  white-space: nowrap;
}
</style>
